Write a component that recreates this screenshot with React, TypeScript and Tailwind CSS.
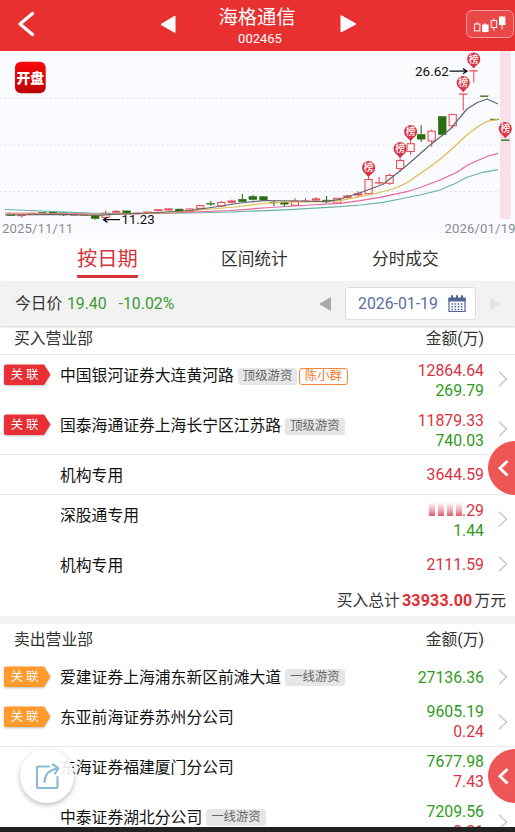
import { useState } from "react";

type Seat = {
    name: string;
    mark?: "red" | "orange";
    tag?: string;
    trader?: string;
    amounts: string[];
    masked?: boolean;
    line?: boolean;
    arrow?: boolean;
};

const buySeats: Seat[] = [
    { name: "中国银河证券大连黄河路", mark: "red", tag: "顶级游资", trader: "陈小群", amounts: ["12864.64", "269.79"], arrow: true },
    { name: "国泰海通证券上海长宁区江苏路", mark: "red", tag: "顶级游资", amounts: ["11879.33", "740.03"], line: true, arrow: true },
    { name: "机构专用", amounts: ["3644.59"], line: true, arrow: true },
    { name: "深股通专用", amounts: [".29", "1.44"], masked: true, arrow: true },
    { name: "机构专用", amounts: ["2111.59"], arrow: true },
];

const sellSeats: Seat[] = [
    { name: "爱建证券上海浦东新区前滩大道", mark: "orange", tag: "一线游资", amounts: ["27136.36"], arrow: true },
    { name: "东亚前海证券苏州分公司", mark: "orange", amounts: ["9605.19", "0.24"], line: true, arrow: true },
    { name: "东海证券福建厦门分公司", amounts: ["7677.98", "7.43"], arrow: true },
    { name: "中泰证券湖北分公司", tag: "一线游资", amounts: ["7209.56", "0.21"], arrow: true },
];

// kind, high, bodyTop, bodyBottom, low  (r = filled red, h = hollow red, g = green)
const candles: [string, number, number, number, number][] = [
    ["g", 214, 214, 215.7, 215.7],
    ["r", 214, 214.3, 216, 217.5],
    ["r", 212.5, 213, 214.7, 214.7],
    ["g", 212, 212.3, 213.7, 214],
    ["g", 211.5, 211.8, 213.2, 214],
    ["g", 212, 212.8, 215, 216],
    ["r", 213.5, 213.8, 215.5, 216],
    ["r", 213.5, 214, 215.7, 216],
    ["g", 215, 215, 218.7, 219.5],
    ["h", 210.3, 213.3, 217.5, 218],
    ["r", 210, 211, 212.6, 213.5],
    ["g", 210.5, 210.8, 214, 214],
    ["r", 212.5, 212.8, 214, 214.5],
    ["r", 211.5, 211.8, 213.2, 213.5],
    ["r", 209, 209.3, 211, 211],
    ["r", 208, 208.5, 210.3, 211],
    ["g", 208.7, 209, 211, 211],
    ["h", 208.5, 209, 211.5, 212],
    ["h", 205, 205.6, 208.4, 209.5],
    ["g", 201, 203.2, 204.2, 206],
    ["h", 201, 202.4, 206, 207],
    ["r", 199.5, 200.7, 202.8, 203.5],
    ["g", 194, 199.2, 201.7, 202],
    ["g", 195, 196.3, 199.7, 200.5],
    ["g", 196, 196.5, 200.3, 201],
    ["g", 201, 202, 203, 206],
    ["g", 201.5, 202, 204.3, 207],
    ["h", 198, 201.3, 205.3, 206],
    ["r", 198, 200.7, 201.7, 202.5],
    ["r", 197, 198.5, 200.3, 201],
    ["g", 196, 200, 202, 203],
    ["h", 198, 198.3, 203, 203.5],
    ["r", 194.5, 195.6, 197.8, 199],
    ["r", 191, 193.3, 195.3, 197],
    ["h", 177, 179.5, 193.7, 195],
    ["r", 176.7, 182.2, 183.4, 184.5],
    ["h", 173.5, 175.5, 183.3, 185],
    ["h", 158, 160.5, 168.5, 172],
    ["h", 141, 143.7, 151.5, 155],
    ["g", 125.3, 134.3, 139.3, 142],
    ["h", 129.5, 131.2, 141, 147],
    ["g", 116, 116.3, 134.7, 136],
    ["h", 114, 114.5, 125.8, 128.5],
    ["r", 94, 93.7, 94.7, 110.5],
    ["r", 71, 70.3, 71.3, 82.5],
    ["g", 96, 95.8, 96.8, 96.8],
    ["g", 119, 119, 120, 120],
    ["g", 140, 139.8, 140.8, 140.8],
];

const pins = [[368.6, 167.7], [400.1, 148.7], [410.6, 131.7], [463.2, 82.7], [473.7, 59], [505.3, 128.7]];

const averages = [
    { color: "#6ab3a3", points: "5,209.5 30,210.5 60,211.8 90,213 130,213.5 190,213 230,212 290,209.6 340,206.7 361,205 383,202.3 400,199 420,195 440,190 455,183.5 467,177.3 483,172.3 498,169.7" },
    { color: "#e0699c", points: "5,213 60,213.5 110,214.3 170,213 230,210.5 270,207.5 310,205 340,203.3 360,200.7 380,197.3 407,191.7 423,186.5 440,180 457,172.3 467,165.5 477,160.7 487,156.5 498,153.3" },
    { color: "#e0bd4a", points: "5,214 60,214.3 110,214.5 170,212.5 200,210 235,207 262,203.5 285,202 310,202 340,200.7 373,194 393,189 407,182.7 437,161.7 453,148 467,134.7 478,126.5 487,121.3 498,119.3" },
    { color: "#65656b", points: "5,215 60,214.3 97,215.3 120,214 150,213 190,210.5 215,207 240,203 265,200.5 300,201 325,201.7 340,199.3 363,191.7 383,184.3 393,176.5 407,165.3 430,145 450,129.3 467,109 477,102.7 487,99 498,104" },
];

const KLine = () => {
    return (
        <svg viewBox="0 51 515 188" className="block h-[188px] w-full shrink-0 bg-[#fafbff]">
            <defs>
                <linearGradient id="badge" x1="0" y1="0" x2="0" y2="1">
                    <stop offset="0" stopColor="#fb0808" />
                    <stop offset="1" stopColor="#bb0509" />
                </linearGradient>
            </defs>
            {[98.3, 145.2, 191.5].map((y) => (
                <line key={y} x1="0" x2="500" y1={y} y2={y} stroke="#e0e1e8" strokeDasharray="2 2.5" />
            ))}
            <rect x="500" y="51" width="10.7" height="168" fill="#f9dfe7" />
            {candles.map(([kind, high, top, bottom, low], i) => {
                const x = 11 + i * 10.517;
                const color = kind === "g" ? "#2e6e12" : "#e8525c";
                return (
                    <g key={i} stroke={color} strokeWidth="1.1">
                        <line x1={x} x2={x} y1={high} y2={top} />
                        <line x1={x} x2={x} y1={bottom} y2={low} />
                        {kind === "h" ? (
                            <rect x={x - 3.6} y={top} width="7.2" height={bottom - top} fill="#fdf5f8" />
                        ) : (
                            <rect x={x - 4} y={top} width="8" height={bottom - top} fill={color} strokeWidth="0.3" />
                        )}
                    </g>
                );
            })}
            {averages.map((item) => (
                <polyline key={item.color} points={item.points} fill="none" stroke={item.color} strokeWidth="1.2" strokeLinejoin="round" />
            ))}
            {pins.map(([x, y]) => (
                <g key={x}>
                    <path d={`M${x - 5.8} ${y + 3}L${x} ${y + 9.5}L${x + 5.8} ${y + 3}Z`} fill="#db3545" />
                    <circle cx={x} cy={y} r="6.6" fill="#db3545" />
                    <text x={x} y={y + 3.6} textAnchor="middle" fontSize="9.8" fontWeight="500" fill="#fff">榜</text>
                </g>
            ))}
            <text x="415" y="75.8" fontSize="13.5" fill="#111">26.62</text>
            <path d="M449.5 71.2H466M463 68.6L467 71.2L463 73.8" fill="none" stroke="#111" strokeWidth="1.3" />
            <text x="121.5" y="224.2" fontSize="13.2" fill="#111">11.23</text>
            <path d="M120 219.7H104M107.5 217L103.5 219.7L107.5 222.4" fill="none" stroke="#111" strokeWidth="1.3" />
            <text x="2" y="232.8" fontSize="13.1" textLength="71" fill="#8b8b90">2025/11/11</text>
            <text x="444.5" y="232.8" fontSize="13.1" textLength="71" fill="#8b8b90">2026/01/19</text>
            <rect x="15" y="61.7" width="30.7" height="31.5" rx="6" fill="url(#badge)" />
            <text x="30.3" y="83.2" textAnchor="middle" fontSize="13.8" fontWeight="900" fill="#fff">开盘</text>
        </svg>
    );
};

const Mark = ({ color }: { color: "red" | "orange" }) => (
    <span className="relative block h-[22px] w-[47px] drop-shadow-[0_1px_1px_rgba(0,0,0,0.25)]">
        <svg viewBox="0 0 47 22" className="absolute inset-0 h-full w-full">
            <path d="M2 .5H40L46.5 10.5L40 21H2Q0 21 0 19V2.500Q0 .5 2 .5Z" fill={color === "red" ? "#e83034" : "#ff9a2e"} />
        </svg>
        <span className="relative block pl-[6.500px] text-[12.5px] leading-[21px] tracking-[3px] text-white">关联</span>
    </span>
);

const SeatRow = ({ seat, side }: { seat: Seat; side: "buy" | "sell" }) => {
    const two = seat.amounts.length > 1;
    const buy = side === "buy";
    const colors = buy ? ["text-[#d9333f]", "text-[#2f9a22]"] : ["text-[#2f9a22]", "text-[#d9333f]"];
    return (
        <div className={`flex shrink-0 ${two ? "h-[50px]" : "h-10"} ${seat.line ? "border-b border-[#e8e8e8]" : ""}`}>
            <div className={`w-[60px] shrink-0 pl-1 ${buy ? "pt-[9.500px]" : "pt-[9px]"}`}>{seat.mark && <Mark color={seat.mark} />}</div>
            <div className={`flex flex-1 items-center whitespace-nowrap text-[#111] ${buy ? "h-[43px]" : "h-[41px]"}`}>
                <span>{seat.name}</span>
                {seat.tag && <span className="ml-1 h-[17px] rounded-[3px] bg-[#e6e6e6] px-[5px] text-[12.4px] leading-[16px] text-[#666]">{seat.tag}</span>}
                {seat.trader && <span className="ml-[1.500px] h-[17px] rounded-[3px] border border-[#f5853f] px-[5px] text-[12.4px] leading-[14px] text-[#f57a2c]">{seat.trader}</span>}
            </div>
            <div className={`shrink-0 text-right leading-5 ${two ? (buy ? "pt-1.5" : "pt-[5px]") : "pt-[10.500px]"}`}>
                {seat.amounts.map((amount, i) => (
                    <div key={i} className={`flex h-5 items-center justify-end ${colors[i]}`}>
                        {seat.masked && i === 0 && (
                            <span className="mb-0.5 flex h-[13px] gap-[3px] blur-[0.7px]">
                                {[0, 1, 2, 3].map((n) => (
                                    <span key={n} className="w-1.5 bg-linear-to-b from-[#fdf3f4] via-[#f3b3b9] to-[#dc5864]" />
                                ))}
                            </span>
                        )}
                        {amount}
                    </div>
                ))}
            </div>
            <div className={`w-[31px] shrink-0 pl-[13.500px] ${two ? "pt-[16.500px]" : "pt-[11.500px]"}`}>
                {seat.arrow && (
                    <svg viewBox="0 0 10 16" className="h-4 w-2.5">
                        <path d="M1 .8L8.500 8L1 15.200" fill="none" stroke="#c8c8c8" strokeWidth="1.5" />
                    </svg>
                )}
            </div>
        </div>
    );
};

const SideButton = ({ className }: { className: string }) => (
    <button className={`absolute left-[488px] h-[54px] w-[54px] rounded-full bg-[#ee5555] ${className}`}>
        <svg viewBox="0 0 54 54" className="h-full w-full">
            <path d="M19.500 20L12 27.300L19.500 34.500" fill="none" stroke="#fff" strokeWidth="3" />
        </svg>
    </button>
);

const App = () => {
    const [tab, setTab] = useState("按日期");

    return (
        <div className="relative flex h-[832px] w-[515px] flex-col overflow-hidden bg-white font-['Roboto','Noto_Sans_CJK_SC',sans-serif] text-[15.8px] text-[#333]">
            <header className="flex h-[51px] shrink-0 items-center bg-[#e83030] text-white">
                <svg viewBox="0 0 160 51" className="h-[51px] w-40 shrink-0">
                    <path d="M32.500 13.500L20 24L32.500 34.500" fill="none" stroke="#fff" strokeWidth="3.2" strokeLinecap="round" strokeLinejoin="round" />
                </svg>
                <svg viewBox="0 0 17 20" className="mb-1 h-5 w-[17px] shrink-0">
                    <path d="M15 2L1 10.500L15 18.500Z" fill="#fff" stroke="#fff" strokeLinejoin="round" />
                </svg>
                <div className="w-[162px] shrink-0 text-center">
                    <div className="mt-[4px] pr-0.5 text-[19.3px] leading-[26px]">海格通信</div>
                    <div className="mb-[5px] pl-1 text-[13px] leading-[15px]">002465</div>
                </div>
                <svg viewBox="0 0 19 20" className="mb-1 h-5 w-[19px] shrink-0">
                    <path d="M2 1.500L17 10L2 18Z" fill="#fff" stroke="#fff" strokeLinejoin="round" />
                </svg>
                <button className="mb-[3px] ml-[108px] h-[28px] w-[47.500px] shrink-0 rounded-[6px] border border-[#f69a9a] bg-[#ea4848]">
                    <svg viewBox="0 0 46 26" className="h-full w-full">
                        <g fill="none" stroke="#fff">
                            <rect x="7.500" y="13" width="5.500" height="7" />
                            <path d="M10.250 11V13M18.300 12V14M18.300 20V21.500M27.200 7.500V10M27.200 16V20M35.500 5V7M35.500 13.500V18.500" />
                            <rect x="24.500" y="9.500" width="5.500" height="7" />
                            <rect x="15.800" y="14" width="5.500" height="6.500" fill="#fff" />
                            <rect x="32.800" y="6" width="5.500" height="7.500" fill="#fff" />
                        </g>
                    </svg>
                </button>
            </header>

            <KLine />

            <nav className="flex h-[42px] shrink-0 items-start pl-[77px]">
                {["按日期", "区间统计", "分时成交"].map((item, i) => (
                    <button
                        key={item}
                        onClick={() => setTab(item)}
                        className={`h-[39px] whitespace-nowrap text-left ${["w-[61px]", "ml-[83px] w-[67px]", "ml-[84px] w-[67px]"][i]} ${tab === item ? "rounded-b-[1px] border-b-[3px] border-[#d9333a] pt-1 text-[20.3px] text-[#d9333a]" : "pt-0.5 text-[16.7px]"}`}
                    >
                        {item}
                    </button>
                ))}
            </nav>

            <div className="z-10 flex h-[45px] shrink-0 items-center bg-[#f2f2f2] pl-[15px] shadow-[0_1px_2px_rgba(0,0,0,0.18)]">
                <div className="w-[304px] whitespace-nowrap pt-px">
                    <span>今日价</span>
                    <span className="ml-[4.500px] text-[#3d9a32]">19.40</span>
                    <span className="ml-3 text-[#3d9a32]">-10.02%</span>
                </div>
                <svg viewBox="0 0 12 14" className="h-3.5 w-3">
                    <path d="M12 0V14L0 7Z" fill="#aaa" />
                </svg>
                <div className="ml-[14px] flex h-[33px] w-[131px] items-center rounded-[3px] border border-[#dedede] bg-white pl-[12px] text-[#5c6da0]">
                    <span className="w-[90px] whitespace-nowrap">2026-01-19</span>
                    <svg viewBox="0 0 18 18" className="h-[18px] w-[18px]">
                        <path d="M1 3.500H17V16.500H1Z" fill="#fff" stroke="#536594" strokeWidth="1.2" />
                        <path d="M.5 2.500H17.500V6.500H.5ZM3 .3H5V3H3ZM8 .3H10V3H8ZM13 .3H15V3H13Z" fill="#536594" />
                        <path d="M3.500 9H15M3.500 11.700H15M3.500 14.400H15" stroke="#536594" strokeWidth="1.5" strokeDasharray="1.600 1.500" />
                    </svg>
                </div>
                <svg viewBox="0 0 12 14" className="ml-[14px] h-3.5 w-3">
                    <path d="M0 1V13L11 7Z" fill="#e3e3e3" />
                </svg>
            </div>

            <div className="flex h-[28.500px] shrink-0 items-center justify-between border-b border-[#e8e8e8] pb-0.5 pl-[14px] pr-[31px]">
                <span>买入营业部</span>
                <span>金额(万)</span>
            </div>
            {buySeats.map((seat, i) => (
                <SeatRow key={i} seat={seat} side="buy" />
            ))}
            <div className="flex h-[31.500px] shrink-0 items-center justify-end pt-px pr-[9px]">
                <span>买入总计</span>
                <b className="mx-[2px] text-[16px] font-bold tracking-[0.2px] text-[#e32e32]">33933.00</b>
                <span>万元</span>
            </div>
            <div className="h-2 shrink-0 bg-[#f2f2f2]" />
            <div className="flex h-[33px] shrink-0 items-center justify-between pb-px pl-[14px] pr-[31px]">
                <span>卖出营业部</span>
                <span>金额(万)</span>
            </div>
            {sellSeats.map((seat, i) => (
                <SeatRow key={i} seat={seat} side="sell" />
            ))}

            <SideButton className="top-[441px]" />
            <SideButton className="top-[749px]" />
            <button className="absolute left-5 top-[749px] h-[54px] w-[54px] rounded-full bg-white/90 shadow-[0_2px_5px_rgba(0,0,0,0.28)]">
                <svg viewBox="0 0 54 54" className="h-full w-full">
                    <g fill="none" stroke="#8abbd4" strokeWidth="2.2" strokeLinecap="round" strokeLinejoin="round">
                        <path d="M29 17.500H18.500Q17 17.500 17 19V37.500Q17 39 18.500 39H36Q37.500 39 37.500 37.500V28" />
                        <path d="M24.500 33Q25 21.500 37.500 19.500M33 15.500L38.500 19.300L35 24.500" />
                    </g>
                </svg>
            </button>
            <div className="absolute inset-x-0 bottom-0 h-[5px] bg-[#222]" />
        </div>
    );
};

export default App;
